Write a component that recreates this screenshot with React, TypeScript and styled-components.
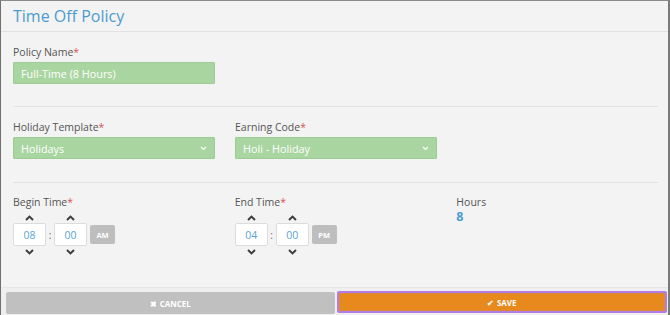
import React from "react";
import styled, { createGlobalStyle } from "styled-components";

const GlobalStyle = createGlobalStyle`
  html, body {
    margin: 0;
    padding: 0;
    background: #f3f3f3;
  }
  * {
    box-sizing: border-box;
  }
`;

const Panel = styled.div`
  width: 670px;
  height: 315px;
  display: flex;
  flex-direction: column;
  background: #f3f3f3;
  border-top: 1px solid #8a8a8a;
  border-left: 1px solid #6f6f6f;
  border-right: 2px solid #7a7a7a;
  font-family: "Open Sans", "Liberation Sans", sans-serif;
  overflow: hidden;
`;

const Header = styled.div`
  height: 31px;
  flex-shrink: 0;
  padding: 4px 0 0 12px;
  border-bottom: 1px solid #e2e2e2;
`;

const Title = styled.h1`
  margin: 0;
  font-size: 16px;
  font-weight: 400;
  color: #4c9ccf;
  line-height: 22px;
`;

const Body = styled.div`
  flex: 1;
  padding: 0 10px 0 12px;
`;

const Section = styled.div<{ $top: number; $height: number }>`
  padding-top: ${(p) => p.$top}px;
  height: ${(p) => p.$height}px;
  display: flex;
  gap: 20px;
  border-bottom: ${(p) => (p.$height ? "1px solid #e2e2e2" : "none")};
`;

const Field = styled.div<{ $width?: number }>`
  width: ${(p) => p.$width ?? 202}px;
  display: flex;
  flex-direction: column;
`;

const Label = styled.label`
  font-size: 10.5px;
  color: #555;
  line-height: 14px;
  margin-bottom: 3px;
`;

const Req = styled.span`
  color: #d9534f;
`;

const GreenBox = styled.div`
  height: 22px;
  background: #a9d5a0;
  border: 1px solid #9ecb95;
  border-radius: 1px;
  color: #fff;
  font-size: 10.8px;
  padding: 0 7px;
  display: flex;
  align-items: center;
  justify-content: space-between;
`;

const Chevron = () => (
  <svg width="7" height="5" viewBox="0 0 7 5">
    <path d="M1 1l2.5 2.5L6 1" fill="none" stroke="#fff" strokeWidth="1.1" />
  </svg>
);

const TimeRow = styled.div`
  display: flex;
  align-items: center;
`;

const Spinner = styled.div`
  display: flex;
  flex-direction: column;
  align-items: center;
  width: 33px;
`;

const Arrow = styled.div`
  height: 11px;
  display: flex;
  align-items: center;
  justify-content: center;
`;

const TimeBox = styled.div`
  width: 33px;
  height: 23px;
  background: #fff;
  border: 1px solid #dcdcdc;
  border-radius: 2px;
  display: flex;
  align-items: center;
  justify-content: center;
  color: #5ba3d4;
  font-size: 10.5px;
`;

const Colon = styled.span`
  width: 8px;
  text-align: center;
  color: #666;
  font-size: 10px;
`;

const Meridian = styled.div`
  width: 25px;
  height: 19px;
  margin-left: 3px;
  background: #bebebe;
  border-radius: 2px;
  color: #fff;
  font-size: 7.5px;
  font-weight: 700;
  display: flex;
  align-items: center;
  justify-content: center;
`;

const HoursValue = styled.div`
  color: #4c9ccf;
  font-weight: 700;
  font-size: 12.5px;
  line-height: 14px;
  margin-top: -2px;
`;

const Footer = styled.div`
  height: 28px;
  flex-shrink: 0;
  display: flex;
  gap: 2px;
  padding: 3px 1px 2px 5px;
  border-top: 1px solid #e6e6e6;
  background: #efefef;
`;

const FooterButton = styled.button<{ $save?: boolean }>`
  flex: 1;
  height: 22px;
  border: ${(p) => (p.$save ? "2px solid #b27de6" : "1px solid #c2c2c2")};
  border-radius: 2px;
  background: ${(p) => (p.$save ? "#e8891d" : "#c0c0c0")};
  color: #fff;
  font-family: "Open Sans", "Liberation Sans", sans-serif;
  font-size: 8px;
  font-weight: 700;
  display: flex;
  align-items: center;
  justify-content: center;
  gap: 3px;
  padding: 0;
  margin-top: ${(p) => (p.$save ? "0" : "1px")};
  box-shadow: ${(p) => (p.$save ? "inset 0 0 0 1px #d98a3a" : "none")};
`;

const UpArrow = () => (
  <svg width="9" height="6" viewBox="0 0 9 6">
    <path d="M1 5L4.5 1.6 8 5" fill="none" stroke="#3d3d3d" strokeWidth="2" />
  </svg>
);

const DownArrow = () => (
  <svg width="9" height="6" viewBox="0 0 9 6">
    <path d="M1 1L4.5 4.4 8 1" fill="none" stroke="#3d3d3d" strokeWidth="2" />
  </svg>
);

const TimePicker: React.FC<{ hour: string; minute: string; period: string }> = ({
  hour,
  minute,
  period,
}) => (
  <>
    <TimeRow>
      <Spinner>
        <Arrow>
          <UpArrow />
        </Arrow>
      </Spinner>
      <Colon />
      <Spinner>
        <Arrow>
          <UpArrow />
        </Arrow>
      </Spinner>
    </TimeRow>
    <TimeRow>
      <TimeBox>{hour}</TimeBox>
      <Colon>:</Colon>
      <TimeBox>{minute}</TimeBox>
      <Meridian>{period}</Meridian>
    </TimeRow>
    <TimeRow>
      <Spinner>
        <Arrow>
          <DownArrow />
        </Arrow>
      </Spinner>
      <Colon />
      <Spinner>
        <Arrow>
          <DownArrow />
        </Arrow>
      </Spinner>
    </TimeRow>
  </>
);

export default function App() {
  return (
    <>
      <GlobalStyle />
      <Panel>
        <Header>
          <Title>Time Off Policy</Title>
        </Header>
        <Body>
          <Section $top={13} $height={75}>
            <Field>
              <Label>
                Policy Name<Req>*</Req>
              </Label>
              <GreenBox>Full-Time (8 Hours)</GreenBox>
            </Field>
          </Section>
          <Section $top={13} $height={76}>
            <Field>
              <Label>
                Holiday Template<Req>*</Req>
              </Label>
              <GreenBox>
                Holidays
                <Chevron />
              </GreenBox>
            </Field>
            <Field>
              <Label>
                Earning Code<Req>*</Req>
              </Label>
              <GreenBox>
                Holi - Holiday
                <Chevron />
              </GreenBox>
            </Field>
          </Section>
          <Section $top={12} $height={0}>
            <Field>
              <Label>
                Begin Time<Req>*</Req>
              </Label>
              <TimePicker hour="08" minute="00" period="AM" />
            </Field>
            <Field>
              <Label>
                End Time<Req>*</Req>
              </Label>
              <TimePicker hour="04" minute="00" period="PM" />
            </Field>
            <Field>
              <Label>Hours</Label>
              <HoursValue>8</HoursValue>
            </Field>
          </Section>
        </Body>
        <Footer>
          <FooterButton>
            <span>✖</span> CANCEL
          </FooterButton>
          <FooterButton $save>
            <span>✔</span> SAVE
          </FooterButton>
        </Footer>
      </Panel>
    </>
  );
}
